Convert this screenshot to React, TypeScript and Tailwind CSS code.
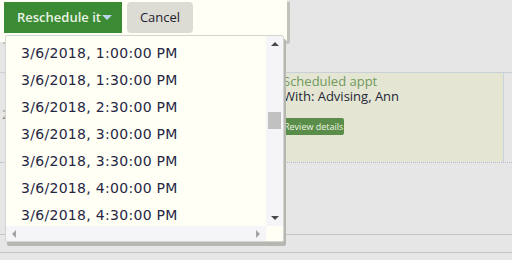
import React from 'react';

const slots = [
  '3/6/2018, 1:00:00 PM',
  '3/6/2018, 1:30:00 PM',
  '3/6/2018, 2:30:00 PM',
  '3/6/2018, 3:00:00 PM',
  '3/6/2018, 3:30:00 PM',
  '3/6/2018, 4:00:00 PM',
  '3/6/2018, 4:30:00 PM',
];

const Arrow: React.FC<{ dir: 'up' | 'down' | 'left' | 'right'; color: string }> = ({ dir, color }) => {
  const pts = {
    up: '0,6 4,2 8,6',
    down: '0,2 4,6 8,2',
    left: '6,0 2,4 6,8',
    right: '2,0 6,4 2,8',
  }[dir];
  return (
    <svg width="8" height="8" viewBox="0 0 8 8">
      <polygon points={pts} fill={color} />
    </svg>
  );
};

const App: React.FC = () => {
  return (
    <div className="relative w-[512px] h-[260px] overflow-hidden bg-[#e6e6e6] font-['Open_Sans',sans-serif]">
      {/* calendar behind */}
      <div className="flex flex-col">
        <div className="h-[73px] border-b border-[#c9d1d6]" />
        <div className="flex h-[90px] border-b border-dotted border-[#aebccb]">
          <div className="w-[283px] pt-[32px] pl-[2px] text-[13px] text-[#888]">2</div>
          <div className="w-[221px] bg-[#e5e5d3] border-r border-[#c8d4dc] flex flex-col items-start">
            <div className="mt-[1px] text-[13px] leading-[15px] text-[#6f9a5c]">Scheduled appt</div>
            <div className="text-[13px] leading-[15px] text-[#1e2838]">With: Advising, Ann</div>
            <div className="mt-[14px] h-[17px] px-[1px] bg-[#5a8d4a] rounded-[2px] text-[9px] leading-[17px] text-[#eef4e4]">Review details</div>
          </div>
        </div>
        <div className="h-[72px] border-b border-[#c4c4c4]" />
        <div className="h-[18px] border-b border-[#c4c4c4]" />
      </div>

      {/* action panel */}
      <div className="absolute left-0 top-0 w-[287px] h-[42px] bg-[#fffff5] rounded-br-[3px] shadow-[3px_2px_0_#c2c2bc]">
        <div className="flex gap-[5px] pl-[4px] pt-[2px]">
          <div className="h-[31px] w-[118px] bg-[#3b8b34] flex items-center pl-[13px] text-[13px] font-semibold text-[#eaf2e4]">
            <span>Reschedule it</span>
            <svg width="10" height="6" viewBox="0 0 10 6" className="ml-[1px] mt-[1px]">
              <polygon points="0,0 10,0 5,5" fill="#b9d6ee" />
            </svg>
          </div>
          <div className="h-[31px] w-[66px] bg-[#dcdcd4] rounded-[4px] flex items-center justify-center text-[13px] text-[#1e2230]">
            Cancel
          </div>
        </div>
      </div>

      {/* time listbox */}
      <div className="absolute left-[5px] top-[35px] w-[279px] h-[207px] bg-[#fffff5] border border-[#d4d4d0] rounded-[2px] shadow-[2px_4px_0_#b7b7b1] flex flex-col">
        <div className="flex flex-1 min-h-0">
          <div className="flex-1 overflow-hidden pt-[4px] pl-[15px] font-['DejaVu_Sans',sans-serif] text-[14px] tracking-[0.3px] text-[#262644]">
            {slots.map((s) => (
              <div key={s} className="h-[27px] leading-[27px] whitespace-nowrap">{s}</div>
            ))}
          </div>
          <div className="w-[17px] bg-[#f5f5f7] flex flex-col items-center">
            <div className="h-[16px] flex items-center"><Arrow dir="up" color="#4a4a4a" /></div>
            <div className="flex-1 w-full px-[2px] pt-[60px]">
              <div className="h-[17px] bg-[#c1c1c1]" />
            </div>
            <div className="h-[16px] flex items-center"><Arrow dir="down" color="#4a4a4a" /></div>
          </div>
        </div>
        <div className="flex h-[15px]">
          <div className="flex-1 bg-[#f5f5f7] flex items-center justify-between px-[4px]">
            <Arrow dir="left" color="#a3a3a3" />
            <Arrow dir="right" color="#a3a3a3" />
          </div>
          <div className="w-[17px]" />
        </div>
      </div>
    </div>
  );
};

export default App;
